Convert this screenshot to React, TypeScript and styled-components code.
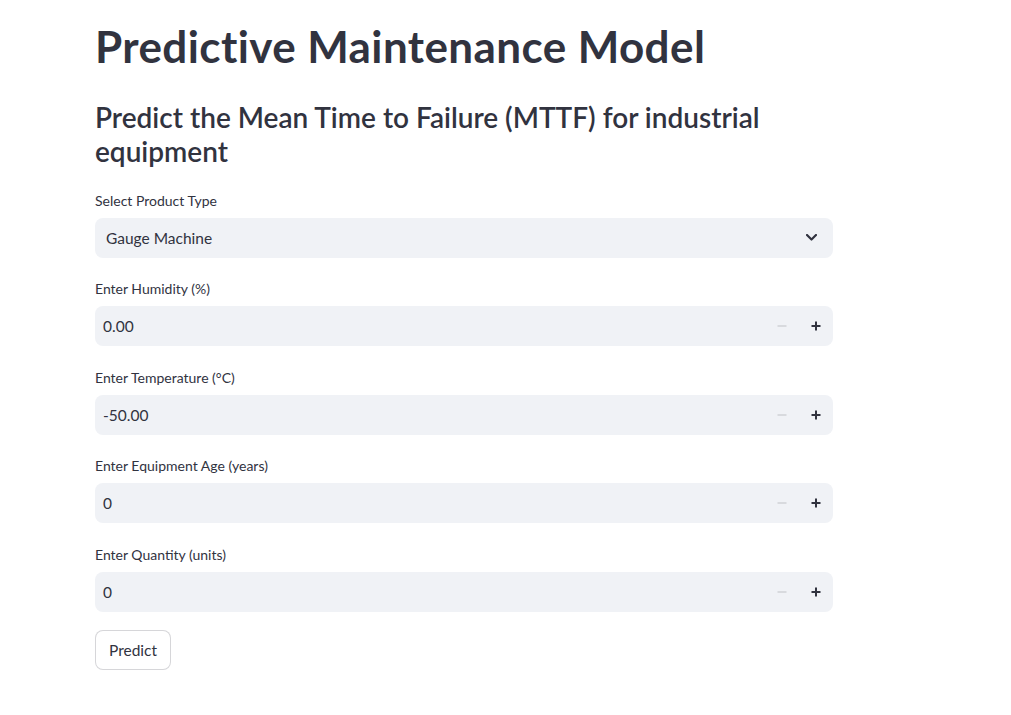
import React from "react";
import styled, { createGlobalStyle } from "styled-components";

const GlobalStyle = createGlobalStyle`
  html, body { margin: 0; padding: 0; background: #ffffff; }
  body {
    font-family: Lato, "Noto Sans", sans-serif;
    color: #31333f;
    -webkit-font-smoothing: antialiased;
  }
  * { box-sizing: border-box; }
`;

const Page = styled.main`
  width: 738px;
  margin-left: 95px;
  padding-top: 19.5px;
  display: flex;
  flex-direction: column;
`;

const Title = styled.h1`
  margin: 0;
  font-size: 44px;
  line-height: 53px;
  font-weight: 700;
  letter-spacing: 0.4px;
  color: #31333f;
`;

const Subtitle = styled.h3`
  margin: 27.7px 0 0;
  font-size: 28px;
  line-height: 34px;
  font-weight: 600;
  color: #31333f;
`;

const Form = styled.div`
  margin-top: 21.5px;
  display: flex;
  flex-direction: column;
  gap: 20.5px;
`;

const Field = styled.div`
  display: flex;
  flex-direction: column;
`;

const Label = styled.label`
  height: 24px;
  margin-bottom: 4px;
  font-size: 14px;
  line-height: 22px;
  color: #31333f;
`;

const Box = styled.div<{ $pad: number }>`
  height: 40px;
  background: #f0f2f6;
  border-radius: 8px;
  display: flex;
  align-items: center;
  padding-left: ${(p) => p.$pad}px;
`;

const Value = styled.span`
  flex: 1;
  font-size: 15.5px;
  color: #31333f;
`;

const Chevron = styled.span`
  width: 40px;
  display: flex;
  justify-content: center;
  align-items: center;
  margin-right: 2px;
`;

const Step = styled.span<{ $disabled?: boolean }>`
  width: 34px;
  height: 100%;
  display: flex;
  align-items: center;
  justify-content: center;
  color: ${(p) => (p.$disabled ? "#d3d4d9" : "#31333f")};
`;

const Button = styled.button`
  align-self: flex-start;
  height: 40px;
  margin-top: -2px;
  padding: 0 13px;
  background: #ffffff;
  border: 1px solid rgba(49, 51, 63, 0.2);
  border-radius: 8px;
  font-family: inherit;
  font-size: 15.5px;
  color: #31333f;
`;

const ChevronIcon = () => (
  <svg width="11" height="7" viewBox="0 0 11 7">
    <path d="M1 1 L5.5 5.5 L10 1" fill="none" stroke="#31333f" strokeWidth="2.2" strokeLinecap="round" strokeLinejoin="round" />
  </svg>
);

const Minus = () => (
  <svg width="10" height="10" viewBox="0 0 10 10">
    <path d="M0.5 5 H9.5" stroke="currentColor" strokeWidth="1.6" />
  </svg>
);

const Plus = () => (
  <svg width="10" height="10" viewBox="0 0 10 10">
    <path d="M0.5 5 H9.5 M5 0.5 V9.5" stroke="currentColor" strokeWidth="2" />
  </svg>
);

const NumberField = ({ label, value }: { label: string; value: string }) => (
  <Field>
    <Label>{label}</Label>
    <Box $pad={8}>
      <Value>{value}</Value>
      <Step $disabled>
        <Minus />
      </Step>
      <Step>
        <Plus />
      </Step>
    </Box>
  </Field>
);

export default function App() {
  return (
    <>
      <GlobalStyle />
      <Page>
        <Title>Predictive Maintenance Model</Title>
        <Subtitle>Predict the Mean Time to Failure (MTTF) for industrial equipment</Subtitle>
        <Form>
          <Field>
            <Label>Select Product Type</Label>
            <Box $pad={11}>
              <Value>Gauge Machine</Value>
              <Chevron>
                <ChevronIcon />
              </Chevron>
            </Box>
          </Field>
          <NumberField label="Enter Humidity (%)" value="0.00" />
          <NumberField label="Enter Temperature (°C)" value="-50.00" />
          <NumberField label="Enter Equipment Age (years)" value="0" />
          <NumberField label="Enter Quantity (units)" value="0" />
          <Button>Predict</Button>
        </Form>
      </Page>
    </>
  );
}
